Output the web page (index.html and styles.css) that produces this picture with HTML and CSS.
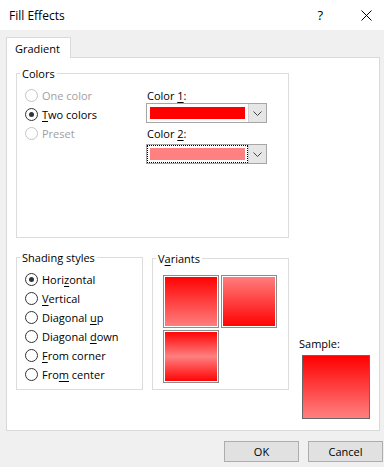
FILE: index.html
```html
<!DOCTYPE html>
<html lang="en">
<head>
    <meta charset="UTF-8">
    <meta name="viewport" content="width=device-width, initial-scale=1.0">
    <title>Fill Effects</title>
    <link rel="stylesheet" href="styles.css">
</head>
<body>
    <div class="titlebar">
        <span class="title">Fill Effects</span>
        <span class="caption-btns">
            <span class="help">?</span>
            <svg class="close" width="11" height="11" viewBox="0 0 11 11">
                <path d="M0.5 0.5 L10.5 10.5 M10.5 0.5 L0.5 10.5" stroke="#000" stroke-width="1" fill="none"/>
            </svg>
        </span>
    </div>

    <div class="content">
        <div class="tabs">
            <div class="tab">Gradient</div>
        </div>

        <div class="panel">
            <div class="group colors">
                <div class="legend">Colors</div>
                <div class="colors-body">
                    <div class="radio-list">
                        <div class="radio disabled"><span class="circle"></span>One color</div>
                        <div class="radio checked"><span class="circle"></span><span><u>T</u>wo colors</span></div>
                        <div class="radio disabled"><span class="circle"></span>Preset</div>
                    </div>
                    <div class="pickers">
                        <div class="field-label">Color <u>1</u>:</div>
                        <div class="combo">
                            <span class="swatch-wrap"><span class="swatch color1"></span></span>
                            <span class="drop"><svg width="9" height="5" viewBox="0 0 9 5"><path d="M0.5 0.5 L4.5 4.5 L8.5 0.5" stroke="#444" fill="none"/></svg></span>
                        </div>
                        <div class="field-label second">Color <u>2</u>:</div>
                        <div class="combo">
                            <span class="swatch-wrap focused"><span class="swatch color2"></span></span>
                            <span class="drop"><svg width="9" height="5" viewBox="0 0 9 5"><path d="M0.5 0.5 L4.5 4.5 L8.5 0.5" stroke="#444" fill="none"/></svg></span>
                        </div>
                    </div>
                </div>
            </div>

            <div class="bottom-row">
                <div class="group shading">
                    <div class="legend">Shading styles</div>
                    <div class="radio-list">
                        <div class="radio checked"><span class="circle"></span><span>Hori<u>z</u>ontal</span></div>
                        <div class="radio"><span class="circle"></span><span><u>V</u>ertical</span></div>
                        <div class="radio"><span class="circle"></span><span>Diagonal <u>u</u>p</span></div>
                        <div class="radio"><span class="circle"></span><span>Diagonal <u>d</u>own</span></div>
                        <div class="radio"><span class="circle"></span><span><u>F</u>rom corner</span></div>
                        <div class="radio"><span class="circle"></span><span>Fro<u>m</u> center</span></div>
                    </div>
                </div>

                <div class="group variants">
                    <div class="legend">V<u>a</u>riants</div>
                    <div class="tiles">
                        <div class="tile down"></div>
                        <div class="tile up"></div>
                        <div class="tile middle"></div>
                    </div>
                </div>

                <div class="sample">
                    <div class="sample-label">Sample:</div>
                    <div class="sample-box"></div>
                </div>
            </div>
        </div>

        <div class="footer">
            <button class="btn">OK</button>
            <button class="btn">Cancel</button>
        </div>
    </div>
</body>
</html>
```

FILE: styles.css
```css
body {
    margin: 0;
    height: 467px;
    overflow: hidden;
    background-color: #f0f0f0;
    font-family: 'Segoe UI', 'Open Sans', sans-serif;
    font-size: 11px;
    color: #000;
}
u {
    text-decoration-thickness: 1px;
    text-underline-offset: 2px;
}

/* title bar */
.titlebar {
    height: 30px;
    background: #fff;
    display: flex;
    align-items: center;
    justify-content: space-between;
    padding-left: 9px;
}
.title {
    font-size: 12px;
}
.caption-btns {
    display: flex;
    align-items: center;
    gap: 38px;
    padding-right: 12px;
}
.help {
    font-size: 13px;
}

/* body of the dialog */
.content {
    padding: 7px 4px 0 6px;
}
.tabs {
    display: flex;
}
.tab {
    position: relative;
    z-index: 1;
    height: 21px;
    line-height: 21px;
    padding: 0 8px;
    background: #fff;
    border: 1px solid #d9d9d9;
    border-bottom: none;
    margin-bottom: -1px;
    box-sizing: border-box;
    width: 65px;
}
.panel {
    height: 374px;
    box-sizing: border-box;
    background: #fff;
    border: 1px solid #d9d9d9;
    padding: 15px 9px 0 9px;
}

/* group boxes */
.group {
    border: 1px solid #dcdcdc;
    box-sizing: border-box;
}
.legend {
    display: table;
    margin: -8px 0 0 3px;
    padding: 0 2px;
    line-height: 16px;
    background: #fff;
}
.colors {
    width: 273px;
    height: 165px;
}
.colors-body {
    display: flex;
    padding-left: 8px;
}
.radio-list {
    margin-top: 4px;
}
.colors .radio-list {
    width: 121px;
}
.radio {
    display: flex;
    align-items: center;
    gap: 4px;
    height: 19px;
}
.circle {
    width: 13px;
    height: 13px;
    box-sizing: border-box;
    border: 1px solid #333;
    border-radius: 50%;
    background: #fff;
    display: flex;
    align-items: center;
    justify-content: center;
}
.radio.checked .circle::after {
    content: "";
    width: 5px;
    height: 5px;
    border-radius: 50%;
    background: #333;
}
.radio.disabled {
    color: #a0a0a0;
}
.radio.disabled .circle {
    border-color: #c4c4c4;
}

/* color pickers */
.pickers {
    width: 121px;
}
.field-label {
    height: 14px;
    line-height: 14px;
    margin-top: 7px;
    padding-left: 1px;
}
.field-label.second {
    margin-top: 4px;
}
.combo {
    display: flex;
    height: 20px;
    box-sizing: border-box;
    border: 1px solid #a6a6a6;
    background: #fff;
    margin-top: 0;
}
.field-label.second + .combo {
    margin-top: 3px;
}
.swatch-wrap {
    flex: 1;
    padding: 2px;
    display: flex;
}
.swatch-wrap.focused {
    outline: 1px dotted #000;
    outline-offset: -1px;
}
.swatch {
    flex: 1;
    margin: 1px;
}
.color1 {
    background: #ff0000;
}
.color2 {
    background: #ff8080;
}
.drop {
    width: 17px;
    background: #e6e6e6;
    border-left: 1px solid #d0d0d0;
    display: flex;
    align-items: center;
    justify-content: center;
}

/* lower half */
.bottom-row {
    display: flex;
    align-items: flex-start;
    margin-top: 19px;
}
.shading {
    width: 127px;
    height: 133px;
    margin-right: 9px;
}
.shading .radio-list {
    padding-left: 8px;
}
.variants {
    width: 137px;
    height: 132px;
    margin-top: 1px;
    margin-right: 10px;
}
.tiles {
    display: grid;
    grid-template-columns: 56px 56px;
    grid-auto-rows: 53px;
    gap: 2px;
    padding: 8px 0 0 10px;
}
.tile {
    box-sizing: border-box;
    border: 1px solid #8c8c8c;
    padding: 1px;
    background-clip: content-box;
}
.tile.down {
    background-image: linear-gradient(#ff0000, #ff8080);
}
.tile.up {
    background-image: linear-gradient(#ff8080, #ff0000);
}
.tile.middle {
    background-image: linear-gradient(#ff0000, #ff8080 50%, #ff0000);
}
.sample {
    margin-top: 80px;
}
.sample-label {
    height: 14px;
    line-height: 14px;
}
.sample-box {
    width: 68px;
    height: 64px;
    margin: 4px 0 0 3px;
    box-sizing: border-box;
    border: 1px solid #666;
    background: linear-gradient(#ff0000, #ff8080);
}

/* buttons */
.footer {
    display: flex;
    justify-content: flex-end;
    gap: 9px;
    margin: 10px -3px 0 0;
}
.btn {
    width: 75px;
    height: 21px;
    padding: 0;
    font-family: inherit;
    font-size: 11px;
    background: #e1e1e1;
    border: 1px solid #adadad;
    color: #000;
}
```
